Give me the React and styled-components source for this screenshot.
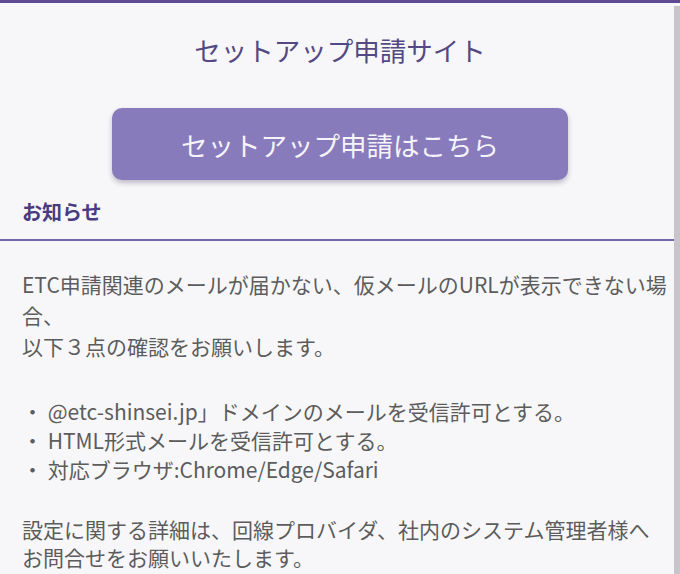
import styled, { createGlobalStyle } from "styled-components";

const GlobalStyle = createGlobalStyle`
    html, body {
        margin : 0;
        padding : 0;
        background-color : #f7f7f9;
    }
    body {
        font-family : "Noto Sans CJK JP", "Noto Sans", sans-serif;
    }
`
const Page = styled.div`
    position : relative;
    width : 680px;
    height : 574px;
    overflow : hidden;
    background-color : #f7f7f9;
    border-top : 3px solid #5f4b93;
    box-sizing : border-box;
`
const Scrollbar = styled.div`
    position : absolute;
    top : 3px;
    right : 0;
    bottom : 0;
    width : 6px;
    background-color : #c6c6ca;
`
const Header = styled.header`
    display : flex;
    flex-direction : column;
    align-items : center;
    padding-top : 29px;
`
const Title = styled.h1`
    margin : 0;
    font-size : 26.5px;
    line-height : 36px;
    font-weight : 400;
    color : #554983;
`
const ApplyButton = styled.button`
    margin-top : 40px;
    width : 456px;
    height : 72px;
    border : none;
    border-radius : 10px;
    background-color : #877bbb;
    color : #f6f4fb;
    font-family : inherit;
    font-size : 26.5px;
    font-weight : 400;
    box-shadow : 0 3px 5px rgba(60, 50, 90, 0.3);
    cursor : pointer;
`
const NoticeHead = styled.h2`
    margin : 18px 0 0;
    padding : 0 22px;
    font-size : 20px;
    line-height : 28px;
    font-weight : 700;
    color : #4a3b80;
`
const Divider = styled.hr`
    margin : 13px 0 0;
    border : none;
    height : 2px;
    background-color : #7566a6;
`
const Body = styled.div`
    padding : 0 11px 0 22px;
    color : #5c5c5c;
    font-size : 21px;
`
const Para = styled.p`
    margin : ${props => props.top}px 0 0;
    line-height : ${props => props.lh}px;
`
const List = styled.ul`
    margin : 35px 0 0;
    padding : 0;
    list-style : none;
    line-height : 29px;
`

const notes = [
    "・ @etc-shinsei.jp」ドメインのメールを受信許可とする。",
    "・ HTML形式メールを受信許可とする。",
    "・ 対応ブラウザ:Chrome/Edge/Safari",
]

const App = () => {
    return(
        <>
            <GlobalStyle/>
            <Page>
                <Header>
                    <Title>セットアップ申請サイト</Title>
                    <ApplyButton>セットアップ申請はこちら</ApplyButton>
                </Header>
                <NoticeHead>お知らせ</NoticeHead>
                <Divider/>
                <Body>
                    <Para top={28} lh={31}>
                        ETC申請関連のメールが届かない、仮メールのURLが表示できない場合、<br/>
                        以下３点の確認をお願いします。
                    </Para>
                    <List>
                        {notes.map((n)=>(
                            <li key={n}>{n}</li>
                        ))}
                    </List>
                    <Para top={31} lh={28}>
                        設定に関する詳細は、回線プロバイダ、社内のシステム管理者様へお問合せをお願いいたします。
                    </Para>
                </Body>
                <Scrollbar/>
            </Page>
        </>
    )
}
export default App
